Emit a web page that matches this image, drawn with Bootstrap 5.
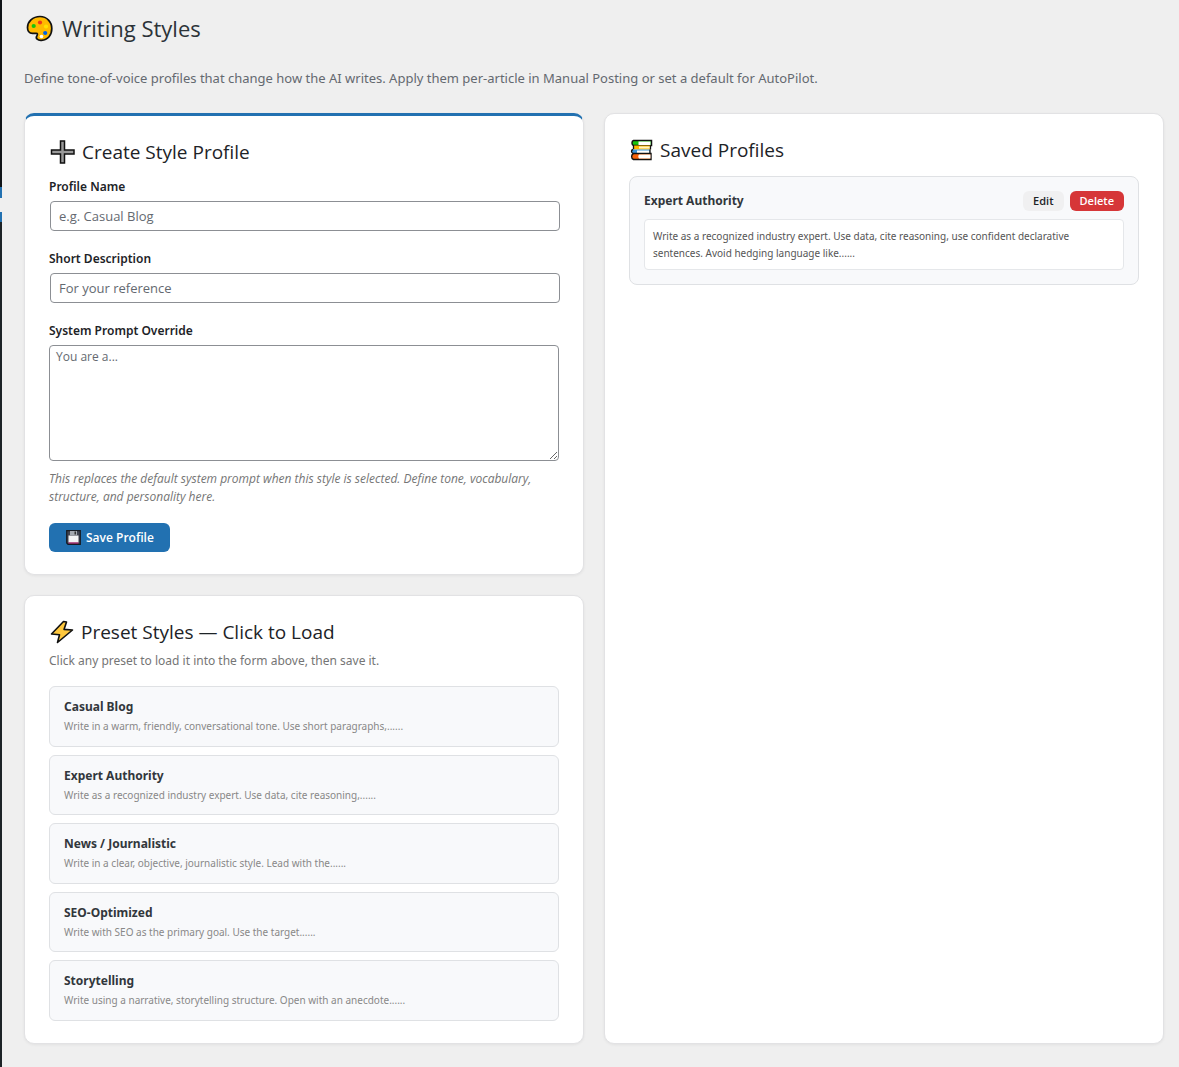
<!DOCTYPE html>
<html lang="en">
<head>
<meta charset="utf-8">
<meta name="viewport" content="width=device-width, initial-scale=1">
<title>Writing Styles</title>
<link href="https://cdn.jsdelivr.net/npm/bootstrap@5.3.0/dist/css/bootstrap.min.css" rel="stylesheet">
<style>
  body { background: #efefef; color: #1d2327; font: 400 13px/18px "Noto Sans", "Open Sans", sans-serif; }
  h1, h2, .panel .form-control, .act, .hint { font-family: "Open Sans", "Noto Sans", sans-serif; }
  .menu-edge { width: 2px; background: #1d2327; }
  .menu-edge .edge-top { height: 187px; background: #101418; }
  .menu-edge .edge-active { height: 35px; padding: 11px 0 10px; background: #2271b1; }
  .menu-edge .edge-notch { height: 14px; background: #efefef; }
  .page-main { padding: 13px 15px 24px 22px; }
  h1 { font-size: 22px; line-height: 30px; font-weight: 400; gap: 8px; margin-bottom: 25px; color: #2c3338; }
  h2 { font-size: 19px; line-height: 24px; font-weight: 400; gap: 7px; margin: 0; }
  .intro { color: #646970; line-height: 20px; margin-bottom: 25px; }
  .panel-grid { --bs-gutter-x: 20px; }
  .panel { background: #fff; border: 1px solid #e2e2e4; border-radius: 10px; padding: 24px 24px 22px; box-shadow: 0 1px 3px rgba(0,0,0,.06); }
  .panel-form { border-top: 3px solid #2271b1; margin-bottom: 20px; }
  .panel-form form { padding-top: 14px; }
  .field-title { display: block; font-size: 12px; line-height: 18px; font-weight: 600; margin-bottom: 5px; }
  .panel .form-control { border: 1px solid #8c8f94; border-radius: 4px; font-size: 13px; color: #2c3338; }
  .panel .form-control::placeholder { color: #646970; }
  .panel input.form-control { height: 30px; padding: 0 8px; margin: 0 -1px 19px 1px; }
  .panel textarea.form-control { height: 116px; padding: 2px 6px; font-size: 12px; line-height: 18px; resize: vertical; }
  .hint { font-size: 12px; font-style: italic; color: #757575; margin: 9px 0 17px; }
  .act { border: 0; border-radius: 6px; font-weight: 600; }
  .act-save { background: #2271b1; color: #fff; font-size: 12px; line-height: 17px; padding: 6px 16px; gap: 5px; }
  .act-small { font-size: 11px; line-height: 20px; padding: 0 10px; }
  .act-edit { background: #f0f0f1; color: #1d2327; }
  .act-delete { background: #d63638; color: #fff; }
  .saved-head { gap: 6px; }
  .sub { color: #757575; font-size: 12px; margin: 8px 0 16px; }
  .preset { background: #f8f9fb; border: 1px solid #dfe1e4; border-radius: 6px; padding: 11px 14px; color: #888; text-align: left; font-size: 10px; line-height: 1.6; }
  .preset .item-name { margin-bottom: 2px; }
  .item-name { display: block; color: #32373c; font-size: 12px; line-height: 18px; font-weight: 700; }
  .preset-list { row-gap: 8px; }
  .saved { background: #f8f9fb; border: 1px solid #dfe1e4; border-radius: 8px; padding: 14px; margin-top: 14px; }
  .excerpt { background: #fff; border: 1px solid #e5e7ea; border-radius: 4px; padding: 8px 8px 7px; margin-top: 8px; color: #555; font-size: 10px; line-height: 17px; }
  .preset { line-height: 1.65; }
</style>
</head>
<body>
<div class="d-flex min-vh-100">
  <div class="menu-edge flex-shrink-0"><div class="edge-top"></div><div class="edge-active"><div class="edge-notch"></div></div></div>
  <main class="page-main flex-grow-1">
    <h1 class="d-flex align-items-center">
      <svg width="30" height="28" viewBox="0 0 30 28" aria-hidden="true"><path d="M16 2.500C8.500 2.500 3.500 8 3.500 13.500c0 4.500 2 5.800 5 5.800h3.800c1.300 0 1.400 1.200.7 2.300-2 3 1 5 4.500 4.700C24 26 27.800 21 27.800 14.500 27.800 8 23 2.500 16 2.500Z" fill="#ffb900" stroke="#111" stroke-width="1.700"/><circle cx="9.700" cy="12" r="2.100" fill="#16c60c"/><circle cx="16" cy="8.500" r="2.100" fill="#f03a17"/><circle cx="22" cy="12.500" r="2.100" fill="#ffe100"/><circle cx="21.200" cy="19" r="2.100" fill="#0063e6"/><circle cx="17.500" cy="22.500" r="1.800" fill="#fff"/></svg>
      Writing Styles
    </h1>
    <p class="intro">Define tone-of-voice profiles that change how the AI writes. Apply them per-article in Manual Posting or set a default for AutoPilot.</p>
    <div class="row panel-grid">
      <div class="col-6 d-flex flex-column">
        <section class="panel panel-form">
          <h2 class="d-flex align-items-center">
            <svg width="26" height="24" viewBox="0 0 26 24" aria-hidden="true"><path d="M11.500 1h4v9H25v4h-9.500v9h-4v-9H2.500v-4h9Z" fill="#999" stroke="#111" stroke-width="1.500"/></svg>
            Create Style Profile
          </h2>
          <form>
            <label class="field-title" for="pname">Profile Name</label>
            <div class="d-flex"><input class="form-control w-auto flex-grow-1" id="pname" type="text" placeholder="e.g. Casual Blog"></div>
            <label class="field-title" for="pdesc">Short Description</label>
            <div class="d-flex"><input class="form-control w-auto flex-grow-1" id="pdesc" type="text" placeholder="For your reference"></div>
            <label class="field-title" for="pprompt">System Prompt Override</label>
            <textarea class="form-control" id="pprompt" placeholder="You are a..."></textarea>
            <p class="hint">This replaces the default system prompt when this style is selected. Define tone, vocabulary, structure, and personality here.</p>
            <button type="button" class="act act-save d-flex align-items-center">
              <svg width="16" height="15" viewBox="0 0 16 15" aria-hidden="true"><path d="M1.700.700h13.600v13.600H3L1.700 13Z" fill="#40434f" stroke="#161a22" stroke-width="1.200"/><path d="M5 1h7v4H5Z" fill="#a4a8af"/><path d="M9.500 1.500H11v3H9.500Z" fill="#333"/><path d="M3.500 5.500h10v7h-10Z" fill="#f4f4f4"/><path d="M3.500 12.500h10v1h-10Z" fill="#d3207c"/></svg>
              Save Profile
            </button>
          </form>
        </section>
        <section class="panel flex-grow-1">
          <h2 class="d-flex align-items-center">
            <svg width="25" height="24" viewBox="0 0 25 24" aria-hidden="true"><path d="M14.500 1.500 2.500 14l8 .8L8.500 22.500 23.500 10l-8.500-.6 2.500-7.400Z" fill="#ffc83d" stroke="#111" stroke-width="1.600" stroke-linejoin="round"/></svg>
            Preset Styles — Click to Load
          </h2>
          <p class="sub">Click any preset to load it into the form above, then save it.</p>
          <div class="preset-list d-grid">
            <button type="button" class="preset"><span class="item-name">Casual Blog</span>Write in a warm, friendly, conversational tone. Use short paragraphs,......</button>
            <button type="button" class="preset"><span class="item-name">Expert Authority</span>Write as a recognized industry expert. Use data, cite reasoning,......</button>
            <button type="button" class="preset"><span class="item-name">News / Journalistic</span>Write in a clear, objective, journalistic style. Lead with the......</button>
            <button type="button" class="preset"><span class="item-name">SEO-Optimized</span>Write with SEO as the primary goal. Use the target......</button>
            <button type="button" class="preset"><span class="item-name">Storytelling</span>Write using a narrative, storytelling structure. Open with an anecdote......</button>
          </div>
        </section>
      </div>
      <div class="col-6 d-flex">
        <section class="panel flex-grow-1">
          <h2 class="d-flex align-items-center">
            <svg width="24" height="24" viewBox="0 0 24 24" aria-hidden="true"><path d="M4.500 2.500H22.500v5H4.500C2.500 7 2.500 3 4.500 2.500Z" fill="#16c60c" stroke="#111" stroke-width="1.500"/><path d="M9.500 3.500h12v3.500H9.500Z" fill="#fff"/><path d="M5 7.500h16.500v4H5Z" fill="#ffb900"/><path d="M10 8.500h11v2H10Z" fill="#fff3c4"/><path d="M21.500 7.500v4M4.500 7.500v4" stroke="#111" stroke-width="1.300"/><path d="M4 11.500h17v4H4C2 14.500 2 12 4 11.500Z" fill="#3a96dd"/><path d="M8 12.500h12.500v2.500H8Z" fill="#fff"/><path d="M21 11.500v4M4 11.500c-2 .5-2 3 0 4" fill="none" stroke="#111" stroke-width="1.300"/><path d="M4.500 15.500H22V21.500H4.500C2 20.500 2 16.500 4.500 15.500Z" fill="#f7630c" stroke="#111" stroke-width="1.400"/><path d="M10 16.500h11.500v4H10c-1-1-1-3 0-4Z" fill="#fff"/></svg>
            Saved Profiles
          </h2>
          <article class="saved">
            <div class="saved-head d-flex align-items-center">
              <strong class="item-name me-auto">Expert Authority</strong>
              <button type="button" class="act act-small act-edit">Edit</button>
              <button type="button" class="act act-small act-delete">Delete</button>
            </div>
            <div class="excerpt">Write as a recognized industry expert. Use data, cite reasoning, use confident declarative sentences. Avoid hedging language like......</div>
          </article>
        </section>
      </div>
    </div>
  </main>
</div>
<script src="https://cdn.jsdelivr.net/npm/bootstrap@5.3.0/dist/js/bootstrap.bundle.min.js"></script>
</body>
</html>
